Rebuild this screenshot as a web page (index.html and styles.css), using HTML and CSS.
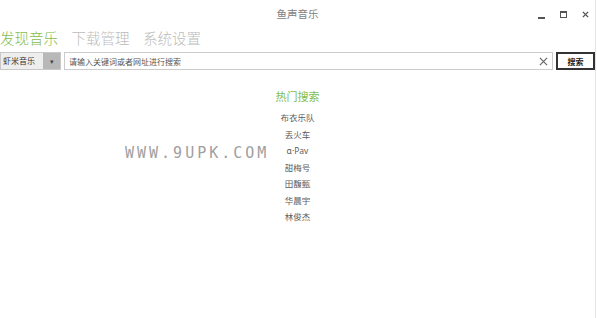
FILE: index.html
```html
<!DOCTYPE html>
<html lang="zh-CN">
<head>
    <meta charset="UTF-8">
    <title>鱼声音乐</title>
    <link rel="stylesheet" href="styles.css">
</head>
<body>
    <div class="window">
        <div class="titlebar">
            <span class="title">鱼声音乐</span>
            <div class="controls">
                <span class="ctl min"></span>
                <span class="ctl max"></span>
                <span class="ctl close">
                    <svg viewBox="0 0 8 8"><path d="M1 1 L7 7 M7 1 L1 7"></path></svg>
                </span>
            </div>
        </div>

        <nav class="tabs">
            <span class="tab active">发现音乐</span>
            <span class="tab">下载管理</span>
            <span class="tab">系统设置</span>
        </nav>

        <div class="search-row">
            <div class="source">
                <span class="source-label">虾米音乐</span>
                <span class="source-arrow">▾</span>
            </div>
            <div class="search-box">
                <span class="placeholder">请输入关键词或者网址进行搜索</span>
                <svg class="clear" viewBox="0 0 10 10"><path d="M1 1 L9 9 M9 1 L1 9"></path></svg>
            </div>
            <button class="search-btn">搜索</button>
        </div>

        <div class="hot">
            <h2>热门搜索</h2>
            <ul>
                <li>布衣乐队</li>
                <li>丢火车</li>
                <li>α·Pav</li>
                <li>甜梅号</li>
                <li>田馥甄</li>
                <li>华晨宇</li>
                <li>林俊杰</li>
            </ul>
            <span class="watermark">WWW.9UPK.COM</span>
        </div>
    </div>
</body>
</html>
```

FILE: styles.css
```css
* {
    margin: 0;
    padding: 0;
    box-sizing: border-box;
}

body {
    width: 597px;
    height: 318px;
    background: #ffffff;
    font-family: "Noto Sans CJK SC", "Noto Sans", sans-serif;
    overflow: hidden;
}

.window {
    width: 596px;
    height: 318px;
    border-right: 1px solid #e4e4e4;
    position: relative;
}

.titlebar {
    height: 27px;
    display: flex;
    align-items: center;
    justify-content: center;
    position: relative;
}

.title {
    font-size: 10.5px;
    color: #808080;
}

.controls {
    position: absolute;
    right: 6px;
    top: 9px;
    display: flex;
    gap: 15px;
    align-items: center;
}

.ctl {
    width: 7px;
    height: 7px;
    display: block;
}

.ctl.min {
    border-bottom: 2px solid #555555;
    height: 8px;
    margin-top: 2px;
}

.ctl.max {
    border: 1px solid #555555;
    border-top-width: 2px;
}

.ctl.close svg {
    width: 7px;
    height: 7px;
    display: block;
    stroke: #555555;
    stroke-width: 1.6;
}

.tabs {
    display: flex;
    gap: 13.5px;
    height: 22px;
    align-items: center;
}

.tab {
    font-size: 14.5px;
    font-weight: 300;
    color: #bcbcbc;
    line-height: 20px;
}

.tab.active {
    color: #84bd4c;
}

.search-row {
    display: flex;
    height: 18px;
    margin-top: 3px;
    align-items: stretch;
}

.source {
    width: 61px;
    display: flex;
    border: 1px solid #c8c8c8;
}

.source-label {
    flex: 1;
    background: #eeeeee;
    font-size: 8px;
    color: #333333;
    line-height: 16px;
    padding-left: 2px;
}

.source-arrow {
    width: 17px;
    background: #b8b8b8;
    font-size: 7px;
    color: #444444;
    text-align: center;
    line-height: 16px;
}

.search-box {
    width: 489px;
    margin-left: 3px;
    border: 1px solid #cccccc;
    display: flex;
    align-items: center;
    justify-content: space-between;
    padding: 0 4px 0 4px;
}

.placeholder {
    font-size: 8px;
    color: #555555;
}

.clear {
    width: 9px;
    height: 9px;
    stroke: #666666;
    stroke-width: 1.3;
}

.search-btn {
    width: 39px;
    margin-left: 3px;
    border: 2px solid #333333;
    background: #ffffff;
    font-family: "Noto Sans CJK SC", sans-serif;
    font-size: 8px;
    font-weight: bold;
    color: #222222;
}

.hot {
    text-align: center;
    position: relative;
    margin-top: 18px;
}

.hot h2 {
    font-size: 11px;
    font-weight: normal;
    color: #84bd4c;
    line-height: 16px;
    margin-bottom: 6px;
}

.hot ul {
    list-style: none;
}

.hot li {
    font-family: "Noto Sans", "Noto Sans CJK SC", sans-serif;
    font-size: 8.5px;
    color: #5c5c5c;
    line-height: 16.5px;
}

.watermark {
    position: absolute;
    left: 125px;
    top: 56px;
    font-family: "DejaVu Sans Mono", monospace;
    font-size: 15px;
    color: #a0a0a0;
    letter-spacing: 3px;
}
```
